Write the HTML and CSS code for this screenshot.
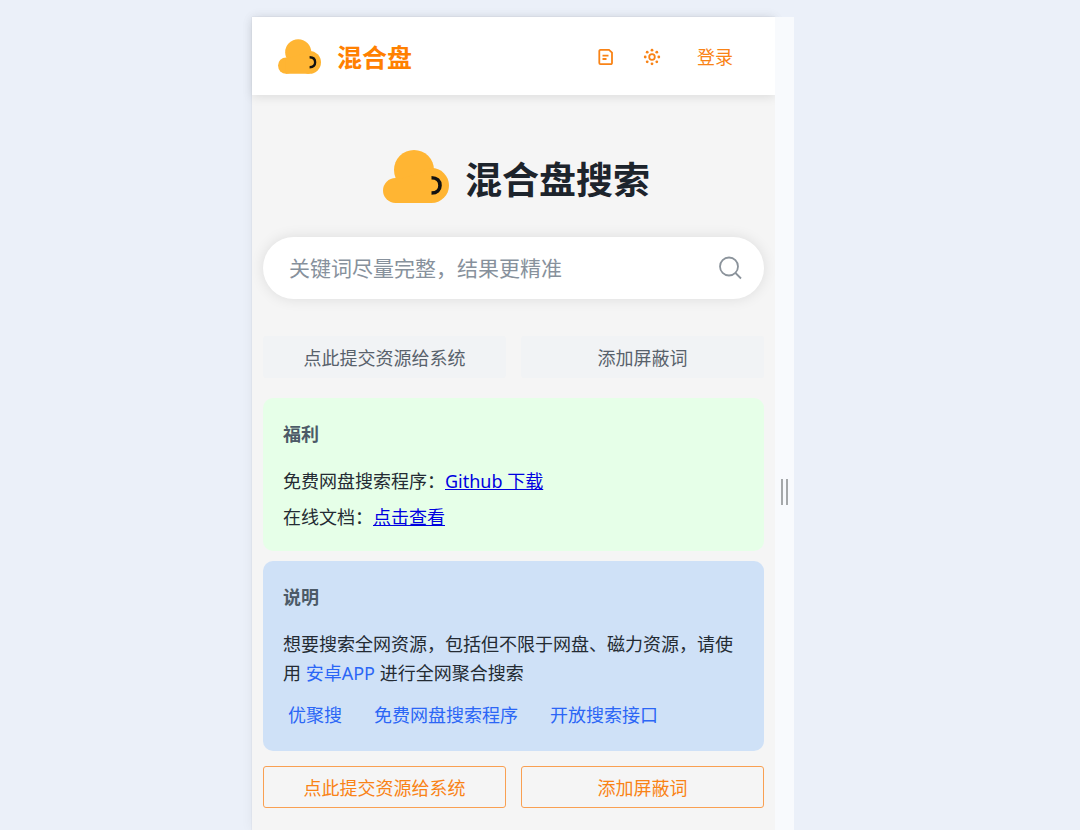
FILE: index.html
```
<!DOCTYPE html>
<html lang="zh-CN">
<head>
  <meta charset="UTF-8" />
  <meta name="viewport" content="width=device-width, initial-scale=1.0" />
  <title>混合盘搜索</title>
  <link rel="stylesheet" href="styles.css">
</head>
<body>

  <!-- shared cloud logo -->
  <svg class="sprite" aria-hidden="true">
    <symbol id="cloud" viewBox="0 0 66 53">
      <g fill="#ffb533">
        <circle cx="31" cy="20" r="20"/>
        <circle cx="48.5" cy="35.5" r="17.5"/>
        <circle cx="12.5" cy="40.5" r="12.5"/>
        <path d="M12 30V53H48.5V20z"/>
      </g>
      <path fill="none" stroke="#111" stroke-width="3.6" d="M48.5 27.700C54 27.700 57 31 57 35.400C57 39.800 54 43 48.500 43"/>
    </symbol>
  </svg>

  <div class="device">
    <div class="screen">
      <header class="header">
        <a class="brand" href="#">
          <svg class="brand-logo"><use href="#cloud"/></svg>
          <span>混合盘</span>
        </a>
        <nav class="nav">
          <button class="icon-btn" title="文档">
            <svg viewBox="0 0 18 18">
              <path d="M3.500 1.800h8.500L15 4.600v10.400a1.200 1.200 0 0 1-1.200 1.200H3.500A1.200 1.200 0 0 1 2.300 15V3A1.200 1.200 0 0 1 3.500 1.800z"/>
              <path d="M5.500 7.600h6M5.500 11h4"/>
            </svg>
          </button>
          <button class="icon-btn" title="主题">
            <svg viewBox="0 0 18 18">
              <circle cx="9" cy="9" r="2.800"/>
              <g class="rays">
                <circle cx="9" cy="2.200" r="1.400"/>
                <circle cx="13.800" cy="4.200" r="1.400"/>
                <circle cx="15.800" cy="9" r="1.400"/>
                <circle cx="13.800" cy="13.800" r="1.400"/>
                <circle cx="9" cy="15.800" r="1.400"/>
                <circle cx="4.200" cy="13.800" r="1.400"/>
                <circle cx="2.200" cy="9" r="1.400"/>
                <circle cx="4.200" cy="4.200" r="1.400"/>
              </g>
            </svg>
          </button>
          <a class="login" href="#">登录</a>
        </nav>
      </header>

      <main class="content">
        <div class="hero">
          <svg class="hero-logo"><use href="#cloud"/></svg>
          <h1>混合盘搜索</h1>
        </div>

        <form class="search">
          <input type="text" placeholder="关键词尽量完整，结果更精准" aria-label="搜索关键词">
          <button type="button" title="搜索">
            <svg viewBox="0 0 24 24"><circle cx="11" cy="10.500" r="9"/><path d="M17.500 17L23 22.500"/></svg>
          </button>
        </form>

        <div class="actions">
          <button class="btn">点此提交资源给系统</button>
          <button class="btn">添加屏蔽词</button>
        </div>

        <section class="card welfare">
          <h2>福利</h2>
          <p>免费网盘搜索程序：<a href="#">Github 下载</a></p>
          <p>在线文档：<a href="#">点击查看</a></p>
        </section>

        <section class="card about">
          <h2>说明</h2>
          <p>想要搜索全网资源，包括但不限于网盘、磁力资源，请使用 <a href="#">安卓APP</a> 进行全网聚合搜索</p>
          <div class="links">
            <a href="#">优聚搜</a>
            <a href="#">免费网盘搜索程序</a>
            <a href="#">开放搜索接口</a>
          </div>
        </section>

        <div class="actions">
          <button class="btn outline">点此提交资源给系统</button>
          <button class="btn outline">添加屏蔽词</button>
        </div>
      </main>
    </div>
    <div class="resizer"><span></span></div>
  </div>

</body>
</html>
```
FILE: styles.css
```
:root {
  --page: #ebf0f9;
  --screen: #f5f5f5;
  --orange: #f98316;
  --brand: #ff8000;
  --blue: #2b66f6;
  --text: #242b33;
}

* {
  box-sizing: border-box;
  font-family: 'Noto Sans', 'Noto Sans CJK SC', sans-serif;
}

body {
  margin: 0;
  min-height: 100vh;
  padding: 17px 34px 0 0;
  background: var(--page);
  color: var(--text);
  font-size: 18px;
  display: grid;
  grid-template-columns: 1fr minmax(320px, 542px) 1fr;
}

a { text-decoration: none; }

button {
  padding: 0;
  border: none;
  background: none;
  color: inherit;
  font-size: 18px;
  cursor: pointer;
}

.sprite {
  position: absolute;
  width: 0;
  height: 0;
}

.device {
  grid-column: 2;
  display: flex;
}

.screen {
  flex: 1;
  background: var(--screen);
  box-shadow: 0 0 12px rgba(0, 0, 0, 0.06), 0 0 1px rgba(0, 0, 0, 0.15);
}

.resizer {
  width: 19px;
  background: #f8fafd;
  display: flex;
  justify-content: center;
  align-items: flex-start;
  padding-top: 462px;
  z-index: 1;
}

.resizer span {
  width: 7px;
  height: 26px;
  border: solid #a5a8aa;
  border-width: 0 2px;
}

.header {
  height: 78px;
  padding: 1px 42px 0 26px;
  background: #fff;
  box-shadow: 0 2px 10px rgba(0, 0, 0, 0.1);
  display: flex;
  align-items: center;
  justify-content: space-between;
}

.brand {
  display: flex;
  align-items: center;
  gap: 16px;
  color: var(--brand);
  font-size: 25px;
  font-weight: 700;
  line-height: 36px;
}

.brand-logo {
  width: 43px;
  height: 35px;
}

.nav {
  display: flex;
  align-items: center;
  gap: 28px;
  color: var(--orange);
}

.icon-btn {
  width: 18px;
  height: 18px;
}

.icon-btn svg {
  display: block;
  fill: none;
  stroke: currentColor;
  stroke-width: 1.8;
}

.icon-btn .rays {
  fill: currentColor;
  stroke: none;
}

.login {
  margin-left: 8px;
  color: inherit;
  line-height: 24px;
}

.content { padding: 55px 11px 22px; }

.hero {
  display: flex;
  align-items: flex-start;
  justify-content: center;
  gap: 16px;
  margin-bottom: 27px;
  padding-left: 6px;
}

.hero-logo {
  width: 66px;
  height: 53px;
}

.hero h1 {
  margin: 0;
  color: #1d242c;
  font-size: 37px;
  font-weight: 700;
  line-height: 60px;
}

.search {
  height: 62px;
  padding: 0 22px 0 26px;
  border-radius: 31px;
  background: #fff;
  box-shadow: 0 0 14px rgba(0, 0, 0, 0.1);
  display: flex;
  align-items: center;
  margin-bottom: 37px;
}

.search input {
  flex: 1;
  min-width: 0;
  padding: 0;
  border: none;
  outline: none;
  background: none;
  font-size: 21px;
}

.search input::placeholder { color: #87919c; }

.search svg {
  display: block;
  width: 24px;
  height: 24px;
  fill: none;
  stroke: #8b939b;
  stroke-width: 1.8;
}

.actions {
  display: grid;
  grid-template-columns: 1fr 1fr;
  gap: 15px;
}

.btn {
  height: 42px;
  border-radius: 3px;
  background: #f1f3f5;
  color: #58616b;
}

.btn.outline {
  border: 1px solid #f9a052;
  background: none;
  color: var(--orange);
}

.card {
  padding: 24px 20px;
  border-radius: 10px;
}

.card h2 {
  margin: 0;
  color: #4c5a67;
  font-size: 18px;
  font-weight: 700;
  line-height: 24px;
}

.card p { margin: 0; }

.welfare {
  margin: 20px 0 10px;
  padding-bottom: 16px;
  background: #e6ffe8;
}

.welfare h2 { margin-bottom: 17px; }
.welfare p { line-height: 36px; }

.welfare a {
  color: #0000e0;
  text-decoration: underline;
}

.about {
  margin-bottom: 15px;
  background: #cfe1f7;
}

.about h2 { margin-bottom: 21px; }
.about p { line-height: 29px; }
.about a { color: var(--blue); }

.links {
  display: flex;
  flex-wrap: wrap;
  gap: 8px 32px;
  margin-top: 15px;
  padding-left: 5px;
  line-height: 24px;
}
```
